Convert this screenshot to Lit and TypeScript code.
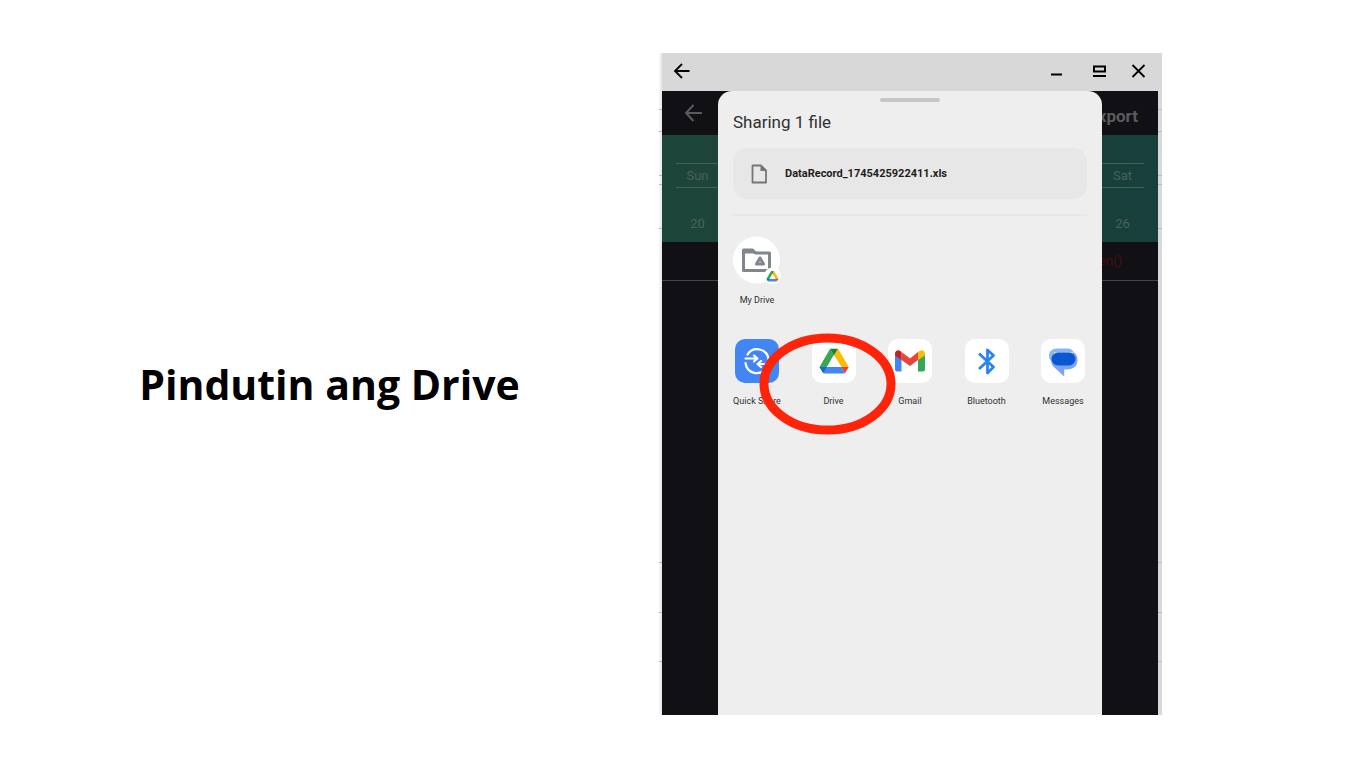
import { LitElement, html, css, svg } from "lit";
import { customElement, property } from "lit/decorators.js";

const driveMark = svg`
  <path d="M14.5 1 8 12.3 0 26l5 8.6L19.3 10z" fill="#34a853"/>
  <path d="M14.5 1h11L19.9 11z" fill="#188038"/>
  <path d="M25.5 1 40 26H30.2L19.9 9.6z" fill="#fbbc04"/>
  <path d="M0 26h11L5.6 34.6z" fill="#1967d2"/>
  <path d="M9.8 26h20.4l4.4 9H6.2l-.8-.6z" fill="#4285f4"/>
  <path d="M30 26h10l-5.2 9z" fill="#ea4335"/>
  <path d="M20 11 11.2 26h17.6z" fill="#fff"/>`;

const icons: Record<string, unknown> = {
  quick: html`<svg viewBox="0 0 44 44" aria-hidden="true">
    <g fill="none" stroke="#fff" stroke-width="2.200" stroke-linecap="round" stroke-linejoin="round">
      <path d="M12.500 15.500A11.500 11.500 0 0 1 33.500 20"/>
      <path d="M10.500 24A11.500 11.500 0 0 0 31.500 29"/>
      <path d="M10.500 19.500h11M19 16.500l3.500 3-3.500 3"/>
      <path d="M34 25h-11M26 22l-3.500 3 3.500 3"/>
    </g></svg>`,
  drive: html`<svg viewBox="0 0 44 44" aria-hidden="true"><g transform="translate(7.500 9) scale(.73)">${driveMark}</g></svg>`,
  gmail: html`<svg viewBox="0 0 44 44" aria-hidden="true">
    <path d="M7 15l6.500 5v12.500H9a2 2 0 0 1-2-2z" fill="#4285f4"/>
    <path d="M30 20l7-5v15.500a2 2 0 0 1-2 2h-5z" fill="#34a853"/>
    <path d="M13.500 13l8.500 6.500 8-6.500v8L22 27l-8.500-6z" fill="#ea4335"/>
    <path d="M7 14.500c0-3 3-4.300 5.300-2.600l1.200 1V21L7 16.500z" fill="#c5221f"/>
    <path d="M37 14.500c0-3-3-4.300-5.300-2.600L30 13v8l7-4.500z" fill="#fbbc04"/></svg>`,
  bluetooth: html`<svg viewBox="0 0 44 44" aria-hidden="true">
    <path d="M14 14.500 28.500 28 22.500 34V11L28.500 16.500 14 30" fill="none" stroke="#2a85ea" stroke-width="2.800" stroke-linejoin="round"/></svg>`,
  messages: html`<svg viewBox="0 0 44 44" aria-hidden="true">
    <path d="M15.500 9.500h11a8 8 0 0 1 6.500 4H13v10.500a8 8 0 0 1-5-7.500c0-4 3.500-7 7.500-7z" fill="#8ab4f8"/>
    <path d="M33 13.500c2 1.500 3.500 4 3.500 7.500 0 6-4.500 9.500-10 9.500h-3.300V37.500L14 29c-2.500-1.700-4-4.500-4-7.500z" fill="#7ba2fb"/>
    <path d="M17 13.500h11a6.500 6.500 0 0 1 0 13H17a6.500 6.500 0 0 1 0-13z" fill="#0b57d0"/></svg>`,
};

@customElement("share-target")
class ShareTarget extends LitElement {
  @property() icon = "";
  @property() label = "";
  static styles = css`
    :host { display: block; }
    .target {
      width: 100%; padding: 0; border: 0; background: none; cursor: pointer;
      display: flex; flex-direction: column; align-items: center; gap: 12px;
      font: 9px/12px Roboto, sans-serif; color: #303030; white-space: nowrap;
    }
    .tile { width: 44px; height: 44px; border-radius: 10px; background: #fff; }
    .quick { background: #4285f4; }
    .tile svg { display: block; width: 100%; height: 100%; }
  `;
  render() {
    return html`<button class="target">
      <span class="tile ${this.icon}">${icons[this.icon]}</span><span>${this.label}</span>
    </button>`;
  }
}

@customElement("share-sheet")
class ShareSheet extends LitElement {
  static styles = css`
    :host {
      display: block; box-sizing: border-box; padding: 7px 15px 0;
      background: #eee; border-radius: 14px 14px 0 0; overflow: hidden;
      font-family: Roboto, sans-serif; color: #303030;
    }
    .handle { width: 60px; height: 4px; border-radius: 2px; background: #c6c6c6; margin: 0 auto; }
    .title { margin: 8px 0 14px; font-size: 17px; line-height: 24px; font-weight: 400; }
    .file {
      display: flex; align-items: center; gap: 16px; height: 51px; padding: 0 16px;
      border-radius: 14px; background: #e7e7e7; font-size: 11px; font-weight: 700; color: #1d1d1d;
    }
    .file svg { width: 20px; height: 20px; }
    .rule { border: 0; border-top: 2px solid #e7e7e7; margin: 15px 0 20px; }
    .folder {
      display: flex; flex-direction: column; align-items: center; gap: 10px; width: 48px;
      padding: 0; border: 0; background: none; cursor: pointer;
      font: 9px/12px Roboto, sans-serif; color: #303030; white-space: nowrap;
    }
    .folder svg { width: 48px; height: 48px; }
    .targets {
      display: grid; grid-template-columns: repeat(5, 48px); justify-content: space-between;
      margin: 33px 0 0; padding: 0; list-style: none;
    }
  `;
  render() {
    return html`
      <div class="handle"></div>
      <h2 class="title">Sharing 1 file</h2>
      <div class="file">
        <svg viewBox="0 0 20 20" aria-hidden="true"><path d="M3.500 1.500h8.500l5 5v12H3.500z" fill="none" stroke="#757575" stroke-width="1.800" stroke-linejoin="round"/><path d="M11.500 1.500v5.500h5.500z" fill="#757575"/></svg>
        <span>DataRecord_1745425922411.xls</span>
      </div>
      <hr class="rule">
      <button class="folder">
        <svg viewBox="0 0 48 48" aria-hidden="true">
          <circle cx="23.500" cy="24" r="23.500" fill="#fff"/>
          <path d="M10.500 14h9l3 3H36.500V34.500H10.500z" fill="none" stroke="#80868b" stroke-width="3" stroke-linejoin="round"/>
          <path d="M10 13h10l4 4.500H10z" fill="#80868b"/>
          <path d="M27 22 23.500 28h7z" fill="none" stroke="#80868b" stroke-width="3" stroke-linejoin="round"/>
          <circle cx="39.500" cy="40" r="8.500" fill="#fff"/>
          <g transform="translate(33.500 35) scale(.3)">${driveMark}</g>
        </svg>
        <span>My Drive</span>
      </button>
      <ul class="targets">
        ${[["quick", "Quick Share"], ["drive", "Drive"], ["gmail", "Gmail"], ["bluetooth", "Bluetooth"], ["messages", "Messages"]].map(
          ([icon, label]) => html`<li><share-target icon=${icon} label=${label}></share-target></li>`
        )}
      </ul>`;
  }
}

@customElement("app-root")
class AppRoot extends LitElement {
  static styles = css`
    :host { display: block; background: #fff; font-family: Roboto, sans-serif; }
    .slide {
      display: grid; grid-template-columns: 659fr 503fr 204fr; min-height: 100vh;
      box-sizing: border-box; padding: 53px 0;
    }
    .caption {
      align-self: center; margin: 0; text-align: center; color: #000;
      font: 700 41px/60px "Open Sans", "Noto Sans", sans-serif;
    }
    .shot {
      --tick: linear-gradient(#b8b8bb, #b8b8bb);
      display: flex; flex-direction: column; box-sizing: border-box; padding: 0 4px 0 3px;
      background:
        var(--tick) 0 56px / 100% 1px no-repeat,
        var(--tick) 0 78px / 100% 1px no-repeat,
        var(--tick) 0 122px / 100% 1px no-repeat,
        var(--tick) 0 131px / 100% 1px no-repeat,
        var(--tick) 0 175px / 100% 1px no-repeat,
        var(--tick) 0 509px / 100% 1px no-repeat,
        var(--tick) 0 559px / 100% 1px no-repeat,
        var(--tick) 0 608px / 100% 1px no-repeat,
        linear-gradient(90deg, #fafafa, #e6e6e6 3px, #d9d9dd 3px);
    }
    .bar {
      display: flex; align-items: center; gap: 21px; height: 38px; padding: 0 10px 2px;
      box-sizing: border-box; background: #d8d8d8;
    }
    button { padding: 0; border: 0; background: none; cursor: pointer; }
    button svg { display: block; width: 20px; height: 20px; }
    .grow { flex: 1; }
    .app { flex: 1; position: relative; background: #111115; color: #5b5b5e; }
    .head {
      display: flex; justify-content: space-between; align-items: center; height: 44px;
      box-sizing: border-box; padding: 0 20px;
    }
    .head svg { width: 22px; height: 22px; }
    .head b { font-size: 17px; line-height: 20px; padding-top: 5px; }
    .calendar { height: 107px; padding: 28px 14px 0; box-sizing: border-box; background: linear-gradient(90deg, #1e4539, #193f3c); }
    .days, .dates { display: flex; justify-content: space-between; font-size: 13px; line-height: 23px; text-align: center; color: #4a625c; }
    .days { border: solid #41635c; border-width: 1px 0; }
    .dates { padding-top: 24px; }
    .cell { width: 43px; }
    .entry { display: flex; justify-content: flex-end; height: 39px; box-sizing: border-box; padding: 10px 36px; border-bottom: 1px solid #454548; font-size: 13px; line-height: 18px; color: #4c0a13; }
    .sheet { position: absolute; inset: 0 56px; }
    .ring { position: absolute; left: 97px; top: 242px; width: 137px; height: 102px; overflow: visible; pointer-events: none; }
  `;
  render() {
    return html`<main class="slide">
      <h1 class="caption">Pindutin ang Drive</h1>
      <section class="shot">
        <header class="bar">
          <button aria-label="Back"><svg viewBox="0 0 20 20"><path d="M17.500 10H3M10 3 3 10l7 7" fill="none" stroke="#000" stroke-width="1.800"/></svg></button>
          <span class="grow"></span>
          <button aria-label="Minimize"><svg viewBox="0 0 20 20"><path d="M5 13.500h11" stroke="#000" stroke-width="2"/></svg></button>
          <button aria-label="Restore"><svg viewBox="0 0 20 20"><path d="M7 5.500h11v5H7zM6 15h13" fill="none" stroke="#000" stroke-width="2"/></svg></button>
          <button aria-label="Close"><svg viewBox="0 0 20 20"><path d="M4.500 4l12 12M16.500 4l-12 12" stroke="#000" stroke-width="1.800"/></svg></button>
        </header>
        <div class="app">
          <div class="head">
            <button aria-label="Previous screen"><svg viewBox="0 0 22 22"><path d="M20 11H4M11.500 3 4 11l7.500 8" fill="none" stroke="#5b5b5e" stroke-width="2"/></svg></button>
            <b>xport</b>
          </div>
          <div class="calendar">
            <div class="days"><span class="cell">Sun</span><span class="cell">Sat</span></div>
            <div class="dates"><span class="cell">20</span><span class="cell">26</span></div>
          </div>
          <div class="entry">en()</div>
          <share-sheet class="sheet"></share-sheet>
          <svg class="ring" viewBox="0 0 137 102" aria-hidden="true"><ellipse cx="68.500" cy="51" rx="63.500" ry="46" fill="none" stroke="#ff230a" stroke-width="9"/></svg>
        </div>
      </section>
    </main>`;
  }
}
